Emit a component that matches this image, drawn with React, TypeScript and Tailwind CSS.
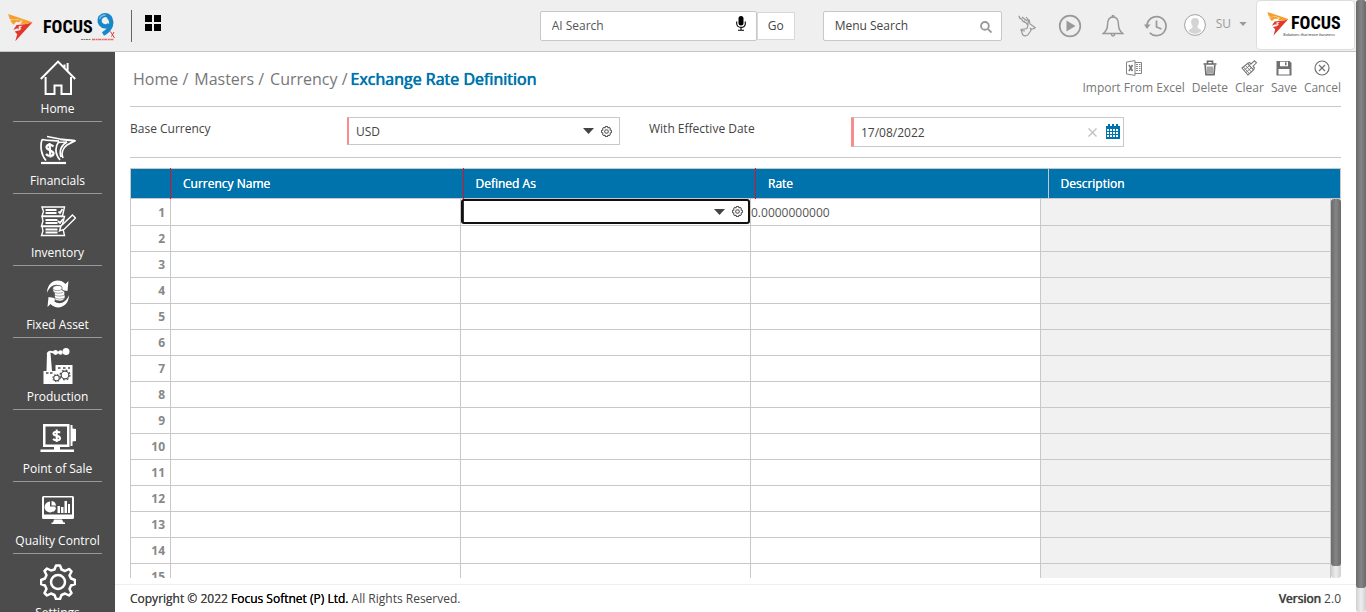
import type { ReactNode } from 'react';
import clsx from 'clsx';

const columns = ['Currency Name', 'Defined As', 'Rate', 'Description'];
const rowNumbers = Array.from({ length: 15 }, (_, i) => i + 1);

function FocusMark({ className }: { className?: string }) {
  return (
    <svg viewBox="0 0 76 86" className={className} aria-hidden="true">
      <path fill="#f5a02a" d="M0 0 75 25 56 31 38 30 44 21 28 16 14 18 5 16Z" />
      <path fill="#f5a02a" d="M6 20 24 17 42 21 34 25 25 24 16 33Z" />
      <path fill="#e2372a" d="M75 25 22 84 28 62 20 54 36 50 28 44 16 49 26 34 42 32 58 31Z" />
      <path fill="#efefef" d="M33 37 44 36 37 42 41 46 34 50 32 46Z" />
    </svg>
  );
}

function HomeIcon() {
  return (
    <svg viewBox="0 0 36 36" className="size-9" fill="none" stroke="#fff" strokeWidth="2" aria-hidden="true">
      <path d="M.8 19 18 1.600 35.200 19M5.600 17v17H14.500v-8.500h7V34H31V17M24.500 4.500v3.500M27.600 3v9" />
    </svg>
  );
}

function FinancialsIcon() {
  return (
    <svg viewBox="0 0 36 36" className="size-9" fill="none" stroke="#fff" strokeWidth="1.700" aria-hidden="true">
      <path d="M2 7.500C0 14 1 23 6 28.500M2 7.500c6 1.500 11 1 17 1.500M7 4.500l13 2.500 15 1.500" />
      <path d="M19 9c-4 6-4 13 1 19M20 7.500 34.500 9 27 13c-4 3-6 8-4 13M18 10.500l9-.5c-6 3-8 9-6 15" />
      <path d="M1 31h25" strokeWidth="2.200" />
      <path strokeWidth="2.200" d="M13.500 14.500C11 12 6 12.500 6.500 15.500s7 2.500 7 6-5.500 3-7.500.5M9.500 11l1 14.500" />
    </svg>
  );
}

function InventoryIcon() {
  return (
    <svg viewBox="0 0 36 36" className="size-9" fill="none" stroke="#fff" strokeWidth="1.400" aria-hidden="true">
      <path d="M2 3h22.500l-2 9H2l1.500-4.500L2 3ZM2 12.500h22.500L22 22H1.500L3 17l-1-4.500ZM2 22.500h20.500l2 9H1.500L3 27l-1-4.500Z" />
      <path strokeWidth="1.800" d="M5.500 6h11M5.500 9h11M18.500 7.500l1.500 1.500 2.500-4M5.500 16h12M5.500 19h12M5.500 25.500h12M5.500 28.500h12M18 17l2 2 3-4" />
      <path fill="#4c4c4c" d="m19.500 27 1.500-5L32.500 11l3 3L24 25.500l-4.500 1.500Z" />
    </svg>
  );
}

function FixedAssetIcon() {
  return (
    <svg viewBox="0 0 36 36" className="size-9" fill="#fff" aria-hidden="true">
      <path d="M7 17C7 5 19 1 25.500 8l3-3-1 10-9-1.500 3.500-2.500C17 6.500 10 9 7 17ZM29 19c0 12-12 16-18.500 9L7.500 31l1-10 9 1.500L14 25C19 29.500 26 27 29 19Z" />
      <path stroke="#4c4c4c" strokeWidth=".7" d="M13 11c2-2 8-2 9 0v3c3 1 3 3 2.500 4.500 1.500 3 0 6-4 6.500-4 0-6-1-6-4v-4c-2-1-2-4-1.500-6Z" />
      <path fill="none" stroke="#4c4c4c" strokeWidth=".5" d="M13 13.500c2 1.500 6 1.500 9 0M13.500 16c3 1.500 6 1.500 9.500 .5M14.500 19c3 1.500 7 1.500 10 0M14.500 21.500c3 2 7 2 10 .5" />
    </svg>
  );
}

function ProductionIcon() {
  return (
    <svg viewBox="0 0 36 36" className="size-9" fill="#fff" aria-hidden="true">
      <path d="M3.500 23h3L7 5h3.500l1.500 18h3.500v-6h17v19h-29V23Z" />
      <path d="M7.500 6C9 3 11 3.500 14 4.500h8" stroke="#fff" strokeWidth="2.200" fill="none" />
      <circle cx="15.500" cy="4.500" r="2.400" />
      <circle cx="20.500" cy="4.500" r="2.200" />
      <circle cx="26" cy="3.500" r="3.500" />
      <path d="M6 25h2.500M10 25h2.500M18 20h2.500M23 20h2.500M28 20h2" stroke="#4c4c4c" strokeWidth="1.300" />
      <g fill="none" stroke="#4c4c4c">
        <circle cx="25" cy="27" r="3.800" strokeWidth="1.200" />
        <circle cx="25" cy="27" r="4.900" strokeWidth="1.200" strokeDasharray="1.900 1.950" />
        <circle cx="16.500" cy="30" r="2.800" strokeWidth="1.100" />
        <circle cx="16.500" cy="30" r="3.700" strokeWidth="1" strokeDasharray="1.400 1.500" />
      </g>
    </svg>
  );
}

function PointOfSaleIcon() {
  return (
    <svg viewBox="0 0 36 36" className="size-9" fill="#fff" aria-hidden="true">
      <path fillRule="evenodd" d="M3 4h26.500v23H3V4Zm2.500 2.500v18h21.500V6.500H5.500ZM30.500 5h2v3.500l4 .5v12l-4 .5V26h-2V5ZM14 27h6v2.500h14v2.500H.5v-2.500H14V27Z" />
      <path fill="none" stroke="#fff" strokeWidth="2.100" d="M20 12.800c-1.500-1.600-6.500-1.600-6.500.9 0 2.800 6.500 1.500 6.500 4.500 0 2.700-5 2.500-7 .8M16.700 9.500v12.500" />
    </svg>
  );
}

function QualityIcon() {
  return (
    <svg viewBox="0 0 36 36" className="size-9" fill="#fff" aria-hidden="true">
      <path fillRule="evenodd" d="M3.500 4h29a1.500 1.500 0 0 1 1.500 1.500v20a1.500 1.500 0 0 1-1.500 1.500h-29A1.500 1.500 0 0 1 2 25.500v-20A1.500 1.500 0 0 1 3.500 4ZM4 5.500v17h28v-17H4ZM14 27.500h8l1.500 3h1.500V32H11.500v-1.500H13l1-3Z" />
      <path d="M10 9.500v5h5.500a5.500 5.500 0 1 1-5.500-5ZM11.500 9a5 5 0 0 1 4.500 4.500h-4.500V9ZM12 16h4a6 6 0 0 1-2.500 4L12 16ZM17.500 14h2.500v7h-2.500zM21 15h2.500v6H21zM24.500 9H27v12h-2.500zM28 12h2v9h-2z" />
    </svg>
  );
}

function SettingsIcon() {
  return (
    <svg viewBox="0 0 36 36" className="size-9" fill="none" stroke="#fff" strokeWidth="2.500" strokeLinejoin="round" aria-hidden="true">
      <circle cx="18" cy="18" r="7" />
      <path d="M16 1.500h4l1.500 4 3.500 1.500 4-2 2.500 2.500-2 4L31 14.500l4 1.500v4l-4 1.500-1.500 3.500 2 4-2.500 2.500-4-2-3.500 1.500-1.500 4h-4l-1.500-4L11 29.500l-4 2L4.500 29l2-4L5 21.500 1 20v-4l4-1.500L6.500 11l-2-4L7 4.500l4 2L14.500 5.500 16 1.500Z" />
    </svg>
  );
}

const modules: { label: string; icon: ReactNode }[] = [
  { label: 'Home', icon: <HomeIcon /> },
  { label: 'Financials', icon: <FinancialsIcon /> },
  { label: 'Inventory', icon: <InventoryIcon /> },
  { label: 'Fixed Asset', icon: <FixedAssetIcon /> },
  { label: 'Production', icon: <ProductionIcon /> },
  { label: 'Point of Sale', icon: <PointOfSaleIcon /> },
  { label: 'Quality Control', icon: <QualityIcon /> },
  { label: 'Settings', icon: <SettingsIcon /> },
];

function SmallGear() {
  return (
    <svg viewBox="0 0 12 12" className="size-[11px]" fill="none" stroke="#555" aria-hidden="true">
      <path strokeWidth="1.100" strokeLinejoin="round" d="M4.900.6h2.200l.5 1.300 1.400-.3 1.300 1.400-.4 1.400 1.500.6v2l-1.500.6.4 1.400L9 10.400l-1.400-.3-.5 1.300H4.900l-.5-1.300-1.400.3L1.700 9l.4-1.400L.6 7V5l1.500-.6L1.700 3 3 1.600l1.400.3L4.900.6Z" />
      <circle cx="6" cy="6" r="2" strokeWidth="1.100" />
    </svg>
  );
}

function Caret({ className }: { className?: string }) {
  return (
    <svg viewBox="0 0 11 6" className={clsx('pointer-events-none shrink-0', className)} aria-hidden="true">
      <path fill="currentColor" d="M0 0h11L5.500 6Z" />
    </svg>
  );
}

const actions: { label: string; icon: ReactNode }[] = [
  {
    label: 'Import From Excel',
    icon: (
      <>
        <path fill="none" stroke="#777" strokeWidth=".9" d="M.5 2 9 .6v14.800L.5 14V2ZM9 2.500h6.500v11H9" />
        <path stroke="#777" strokeWidth="1.600" d="m3 5 3.500 6M6.500 5 3 11" />
        <path stroke="#888" strokeWidth="1" d="M10 4.500h2M13 4.500h1.500M10 6.500h2M13 6.500h1.500M10 8.500h2M13 8.500h1.500M10 10.500h2M13 10.500h1.500" />
      </>
    ),
  },
  {
    label: 'Delete',
    icon: (
      <>
        <path fill="none" stroke="#666" strokeWidth="1.600" d="M1.500 4h13M5.500 3.500V1.300h5v2.200" />
        <path fill="none" stroke="#6c6c6c" strokeWidth="1.700" d="M3.200 5 4 14.700h8L12.800 5" />
        <path stroke="#6c6c6c" strokeWidth="1.200" d="M6 6.500v7M8 6.500v7M10 6.500v7" />
      </>
    ),
  },
  {
    label: 'Clear',
    icon: (
      <>
        <path fill="none" stroke="#777" strokeWidth="1.100" d="m1 8 5.500-4.500 6 6.500-5.500 5L1 8ZM6.500 3.500l2-1 1.500 1.500L13.500.8l2 2L12 6.200l1.500 1.600-1 2.200" />
        <path fill="none" stroke="#777" strokeWidth=".9" d="m2.500 7 6 6.800M4.500 5.500l6 6.500M3 10.500l5.500-5M5 12.500l5.500-5M9.500 4 8 5.500l4 3.500" />
      </>
    ),
  },
  {
    label: 'Save',
    icon: (
      <>
        <path fill="#707070" d="M.5 1h13l2 2v12.500H.5V1Z" />
        <path fill="#fff" d="M4 1.700h8v4.500H4zM2.500 9h11v5.500h-11z" />
        <path fill="#707070" d="M9 2.300h1.500v3H9z" />
      </>
    ),
  },
  {
    label: 'Cancel',
    icon: (
      <g fill="none" stroke="#707070" strokeWidth="1.200">
        <circle cx="8" cy="8" r="7" />
        <path d="m5 5 6 6M11 5l-6 6" />
      </g>
    ),
  },
];

function TopBar() {
  return (
    <header className="flex h-[52px] shrink-0 items-center border-b border-[#c4c4c4] bg-[#efefef]">
      <a href="#home" aria-label="Focus 9" className="flex items-center pl-2">
        <FocusMark className="mt-1 h-7 w-[25px]" />
        <span className="mt-0.5 ml-2.5 font-['Liberation_Sans_Narrow','Roboto_Condensed','Liberation_Sans',sans-serif] text-[18px] leading-7 font-bold text-black">
          FOCUS
        </span>
        <svg viewBox="0 0 24 30" className="ml-0.5 h-[30px] w-6 overflow-visible" aria-hidden="true">
          <path fill="none" stroke="#1787c9" strokeWidth="4.200" d="M14.500 13.500A5.700 5.700 0 1 1 15.800 8.500M13.500 5.500c5.500 6 2.500 13-5.500 17.500" />
          <path fill="none" stroke="#7dbbe3" strokeWidth="1.300" d="M4.500 8c.8-2.500 3-4 6-4" />
          <path stroke="#dc3a3a" strokeWidth="1" fill="none" d="m15.500 20.500 4 6.500M19 21l-2.500 4.500" />
          <path stroke="#e26a6a" strokeWidth="1.600" strokeDasharray="3 .6 2 .5" d="M-3 28.500h22" />
          <path stroke="#777" strokeWidth="1" strokeDasharray="2 .5" d="M-14 28.500H-4" />
        </svg>
      </a>
      <span className="ml-3 h-8 w-px bg-[#666]" />
      <button type="button" aria-label="Applications" className="-mt-1.5 ml-[13px] grid grid-cols-2 gap-0.5">
        {[0, 1, 2, 3].map((n) => (
          <span key={n} className="h-[7px] w-[7px] bg-black" />
        ))}
      </button>

      <div className="ml-auto flex items-center">
        <div className="flex h-[30px] w-[217px] items-center rounded-xs border border-[#c8c8c8] bg-white pr-2.5 pl-[11px]">
          <input aria-label="AI Search" placeholder="AI Search" className="min-w-0 flex-1 text-[12px] outline-none placeholder:text-[#555]" />
          <svg viewBox="0 0 10 15" className="-mt-1 h-[15px] w-2.5" aria-hidden="true">
            <rect x="2.500" width="5" height="9.500" rx="2.500" />
            <path fill="none" stroke="#000" strokeWidth="1.100" d="M.7 5.500v2C.7 10 2.500 11.400 5 11.400S9.300 10 9.300 7.500v-2M5 11.500V14M2 14.300h6" />
          </svg>
        </div>
        <button type="button" className="h-7 w-[38px] border border-[#d8d8d8] bg-white text-[12px] text-[#444]">
          Go
        </button>
        <div className="ml-7 flex h-[30px] w-[179px] items-center rounded-xs border border-[#c8c8c8] bg-white pr-[9px] pl-[11px]">
          <input aria-label="Menu Search" placeholder="Menu Search" className="min-w-0 flex-1 text-[12px] outline-none placeholder:text-[#444]" />
          <svg viewBox="0 0 13 13" className="mt-0.5 size-3" fill="none" stroke="#999" strokeWidth="2" aria-hidden="true">
            <circle cx="5.300" cy="5.300" r="4.200" />
            <path d="m8.500 8.500 4 4" />
          </svg>
        </div>

        <div className="ml-4 flex items-center gap-5 text-[#999]">
          <button type="button" aria-label="Assistant">
            <svg viewBox="0 0 18 22" className="h-[22px] w-[18px]" fill="none" stroke="currentColor" strokeWidth="1.200" aria-hidden="true">
              <path d="M1 .8c0 2 1 3 3 3.500 0 2 2 3 4.500 3.500M4 2l4.500 3.500 1.500-1L8 2M7 6l-1.500.5 5 3M10.500 4.500l-.5 4M8.500 8.500 10 10l-1 3.500-6 1 1.500 5c2 2 4.500 2 6-.5l2.500-3.500-.5-2c2 1 3.500.5 4.800-.8L12 9l-1-4.500M4 15.500l3 .5" />
            </svg>
          </button>
          <button type="button" aria-label="Play" className="ml-0.5">
            <svg viewBox="0 0 24 24" className="size-6" aria-hidden="true">
              <circle cx="12" cy="12" r="10.300" fill="none" stroke="currentColor" strokeWidth="1.700" />
              <path fill="currentColor" d="M8.500 6.500 17.500 12l-9 5.500Z" />
            </svg>
          </button>
          <button type="button" aria-label="Notifications">
            <svg viewBox="0 0 22 24" className="h-6 w-[22px]" fill="none" stroke="currentColor" strokeWidth="1.500" aria-hidden="true">
              <path d="M11 3C6.500 3 5.500 7 5.500 11c0 4-1 6-4.300 8.500h19.600C17.500 17 16.500 15 16.500 11c0-4-1-8-5.500-8ZM9.300 20c.3 2.500 3.100 2.500 3.400 0" />
              <circle cx="11" cy="2.200" r=".8" />
            </svg>
          </button>
          <button type="button" aria-label="History">
            <svg viewBox="0 0 23 24" className="h-6 w-[23px]" fill="none" stroke="currentColor" strokeWidth="1.700" aria-hidden="true">
              <path d="M3 12a9.500 9.500 0 1 1 2.800 6.800M12.500 6.500v6.500l5 2" />
              <path fill="currentColor" stroke="none" d="M0 10.500h6.500L3 15Z" />
            </svg>
          </button>
        </div>
        <button type="button" className="-mt-1 ml-[17px] flex items-center text-[12px] text-[#999]">
          <svg viewBox="0 0 22 22" className="mt-0.5 h-[22px] w-[22px]" aria-hidden="true">
            <circle cx="11" cy="11" r="10.400" fill="#fff" stroke="#999" strokeWidth=".9" />
            <path fill="#d4d4d4" d="M11 4c3 0 4.200 2 3.900 4.500-.2 2-1 3-1.600 4 .2 2 2 2.200 3.500 3.200l.8 1.300a9 9 0 0 1-13.200 0l.8-1.300c1.500-1 3.300-1.200 3.500-3.200-.6-1-1.400-2-1.600-4C6.800 6 8 4 11 4Z" />
          </svg>
          <span className="ml-2.5">SU</span>
          <Caret className="ml-2 h-1 w-2" />
        </button>
        <div className="mr-px -mt-0.5 ml-[9px] flex h-[50px] w-[99px] flex-col justify-center rounded-sm border border-[#ddd] bg-white pl-2.5">
          <div className="flex items-start">
            <FocusMark className="h-6 w-[22px]" />
            <div className="ml-0.5 pt-0.5">
              <div className="font-['Liberation_Sans_Narrow','Roboto_Condensed','Liberation_Sans',sans-serif] text-[18px] leading-[18px] font-bold text-black">
                FOCUS
              </div>
              <div className="-ml-2 font-['Liberation_Sans',sans-serif] text-[4px] leading-[6px] whitespace-nowrap text-[#333] italic">
                Solutions that move business
              </div>
            </div>
          </div>
        </div>
      </div>
    </header>
  );
}

function Sidebar() {
  return (
    <nav aria-label="Modules" className="w-[115px] shrink-0 overflow-hidden bg-[#4c4c4c]">
      <ul>
        {modules.map((m) => (
          <li key={m.label} className="group px-[13px]">
            <a
              href={`#${m.label}`}
              className="flex flex-col items-center gap-[3px] border-b border-[#999] pt-2.5 pb-0.5 text-[12px] leading-5 whitespace-nowrap text-white group-first:pt-2 group-last:border-0"
            >
              {m.icon}
              {m.label}
            </a>
          </li>
        ))}
      </ul>
    </nav>
  );
}

function Fields() {
  return (
    <form className="grid h-[51px] shrink-0 grid-cols-[217fr_273fr_29fr_202fr_273fr_217fr] items-start border-b border-[#c8c8c8] pt-2.5">
      <label htmlFor="base-currency" className="pt-[3px] leading-[18px]">
        Base Currency
      </label>
      <div className="flex h-7 items-center border border-l-2 border-[#c8c8c8] border-l-[#f98c8c] pr-[7px]">
        <select id="base-currency" className="h-full min-w-0 flex-1 appearance-none pt-0.5 pl-[7px] outline-none">
          <option>USD</option>
        </select>
        <Caret className="h-1.5 w-[11px]" />
        <button type="button" aria-label="Base currency options" className="ml-[7px]">
          <SmallGear />
        </button>
      </div>
      <span />
      <label htmlFor="effective-date" className="pt-[3px] leading-[18px]">
        With Effective Date
      </label>
      <div className="flex h-[30px] items-center border border-l-3 border-[#c8c8c8] border-l-[#f98c8c] pr-[3px]">
        <input id="effective-date" type="text" defaultValue="17/08/2022" className="min-w-0 flex-1 pt-0.5 pl-[7px] outline-none" />
        <button type="button" aria-label="Clear date">
          <svg viewBox="0 0 9 9" className="size-[9px]" stroke="#c4c4c4" strokeWidth="1.500" aria-hidden="true">
            <path d="m.5.5 8 8M8.500.5l-8 8" />
          </svg>
        </button>
        <button type="button" aria-label="Pick date" className="-mt-0.5 ml-[9px]">
          <svg viewBox="0 0 14 15" className="h-[15px] w-3.5" aria-hidden="true">
            <path fill="#0072ac" d="M0 2h14v13H0zM2 0h2v2H2zM6 0h2v2H6zM10 0h2v2h-2z" />
            <path stroke="#fff" strokeWidth="2" strokeDasharray="2 1" d="M1 6h12M1 9h12M1 12h12" />
          </svg>
        </button>
      </div>
    </form>
  );
}

function RateGrid() {
  return (
    <section aria-label="Exchange rates" className="mt-2.5 flex min-h-0 flex-1 flex-col">
      <table className="w-full shrink-0 table-fixed border-collapse">
        <thead>
          <tr className="h-[30px] border border-[#c8c8c8] bg-[#0072ac] text-left text-white">
            <th className="w-10" aria-label="Row" />
            {columns.map((c, i) => (
              <th
                key={c}
                className={clsx(
                  'border-l pl-3 font-medium [text-shadow:0_0_0_currentColor]',
                  i === 3 ? 'border-[#c8c8c8]' : 'border-[#e01020]',
                )}
              >
                {c}
              </th>
            ))}
          </tr>
        </thead>
      </table>
      <div className="flex min-h-0 flex-1">
        <div className="min-w-0 flex-1 overflow-hidden">
          <table className="w-full table-fixed border-collapse">
            <tbody>
              {rowNumbers.map((n) => (
                <tr key={n} className="h-[26px]">
                  <th scope="row" className="w-10 border border-t-0 border-[#c8c8c8] p-0 pt-0.5 pr-[5px] text-right font-bold text-[#888]">
                    {n}
                  </th>
                  <td className="border border-t-0 border-[#c8c8c8] p-0" />
                  <td className="border border-t-0 border-[#c8c8c8] p-0">
                    {n === 1 && (
                      <div className="flex h-[25px] items-center rounded-[3px] border-2 border-[#111] pr-[5px]">
                        <input aria-label="Defined As" className="h-full min-w-0 flex-1 border-l border-[#333] outline-none" />
                        <Caret className="h-1.5 w-[11px]" />
                        <button type="button" aria-label="Defined As options" className="ml-[7px]">
                          <SmallGear />
                        </button>
                      </div>
                    )}
                  </td>
                  <td className="border border-t-0 border-[#c8c8c8] p-0 pt-0.5 text-[#555]">{n === 1 && '0.0000000000'}</td>
                  <td className="border border-t-0 border-[#c8c8c8] bg-[#f1f1f1] p-0" />
                </tr>
              ))}
            </tbody>
          </table>
        </div>
        <div className="flex w-2.5 flex-col rounded-[3px] bg-linear-to-r from-[#cfcfcf] via-[#eee] to-[#cfcfcf] pb-3">
          <div className="flex-1 rounded-[3px] bg-linear-to-r from-[#6a6a6a] via-[#858585] to-[#6a6a6a]" />
        </div>
      </div>
    </section>
  );
}

export default function App() {
  return (
    <div className="flex h-screen overflow-hidden bg-white font-['Open_Sans','Noto_Sans',sans-serif] text-[12px] text-[#444]">
      <div className="flex min-w-0 flex-1 flex-col">
        <TopBar />
        <div className="flex min-h-0 flex-1">
          <Sidebar />
          <div className="flex min-w-0 flex-1 flex-col">
            <main className="flex min-h-0 flex-1 flex-col px-[15px] pb-1.5">
              <div className="flex h-[55px] shrink-0 items-center justify-between border-b border-[#c8c8c8]">
                <nav aria-label="Breadcrumb" className="flex gap-1.5 pl-[3px] text-[16px] whitespace-nowrap text-[#777]">
                  <span>
                    <a href="#home">Home</a> /
                  </span>
                  <span>
                    <a href="#masters">Masters</a> /
                  </span>
                  <span>
                    <a href="#currency">Currency</a> /
                  </span>
                  <span className="-ml-[3px] font-medium text-[#0072ac] [text-shadow:0_0_0_currentColor,0_0_1px_currentColor]">
                    Exchange Rate Definition
                  </span>
                </nav>
                <div className="-mt-0.5 flex gap-[7px] text-[#777]">
                  {actions.map((a) => (
                    <button key={a.label} type="button" className="flex flex-col items-center gap-[3px] leading-[18px]">
                      <svg viewBox="0 0 16 16" className="size-4" aria-hidden="true">
                        {a.icon}
                      </svg>
                      {a.label}
                    </button>
                  ))}
                </div>
              </div>
              <Fields />
              <RateGrid />
            </main>
            <footer className="flex h-7 shrink-0 items-center justify-between border-t border-[#eee] px-[15px]">
              <p>
                <span className="font-medium [text-shadow:0_0_0_currentColor]">
                  Copyright © 2022{' '}
                  <span className="text-black [text-shadow:0_0_0_currentColor]">Focus Softnet (P) Ltd.</span>
                </span>{' '}
                All Rights Reserved.
              </p>
              <p>
                <span className="font-medium [text-shadow:0_0_0_currentColor,0_0_1px_currentColor]">Version</span> 2.0
              </p>
            </footer>
          </div>
        </div>
      </div>
      <div className="flex w-2.5 shrink-0 flex-col rounded-[3px] bg-linear-to-r from-[#cfcfcf] via-[#eee] to-[#cfcfcf] pb-6">
        <div className="flex-1 rounded-[3px] bg-linear-to-r from-[#6a6a6a] via-[#858585] to-[#6a6a6a]" />
      </div>
    </div>
  );
}
